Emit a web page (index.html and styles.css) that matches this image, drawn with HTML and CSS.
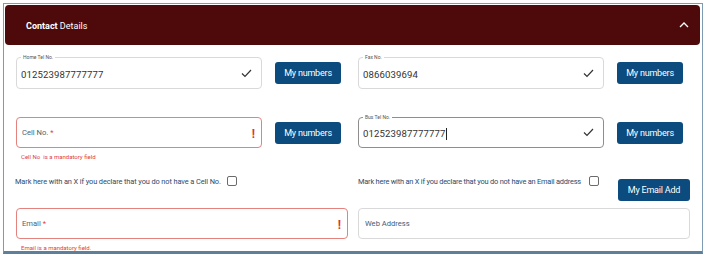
FILE: index.html
```html
<!DOCTYPE html>
<html lang="en">
<head>
    <meta charset="UTF-8">
    <meta name="viewport" content="width=device-width, initial-scale=1.0">
    <title>Contact Details</title>
    <link rel="stylesheet" href="styles.css">
</head>
<body>

<div class="panel">
    <div class="panel-head">
        <span class="panel-title"><b>Contact</b> Details</span>
        <svg class="chevron" width="10" height="7" viewBox="0 0 10 7"><polyline points="1,6 5,2 9,6" fill="none" stroke="#fff" stroke-width="1.3"/></svg>
    </div>

    <div class="panel-body">
        <!-- row 1 -->
        <div class="row row-one">
            <div class="phone">
                <div class="field">
                    <span class="notch">Home Tel No.</span>
                    <span class="value">012523987777777</span>
                    <svg class="tick" width="11" height="9" viewBox="0 0 11 9"><polyline points="1,4.5 4,7.5 10,1" fill="none" stroke="#333" stroke-width="1.2"/></svg>
                </div>
                <button class="btn">My numbers</button>
            </div>
            <div class="phone">
                <div class="field">
                    <span class="notch">Fax No.</span>
                    <span class="value">0866039694</span>
                    <svg class="tick" width="11" height="9" viewBox="0 0 11 9"><polyline points="1,4.5 4,7.5 10,1" fill="none" stroke="#333" stroke-width="1.2"/></svg>
                </div>
                <button class="btn">My numbers</button>
            </div>
        </div>

        <!-- row 2 -->
        <div class="row row-two">
            <div class="cell">
                <div class="phone">
                    <div class="field field-error">
                        <span class="placeholder">Cell No. <i>*</i></span>
                        <span class="bang">!</span>
                    </div>
                    <button class="btn">My numbers</button>
                </div>
                <p class="error-text">Cell No&nbsp; is a mandatory field</p>
            </div>
            <div class="phone">
                <div class="field field-focus">
                    <span class="notch">Bus Tel No.</span>
                    <span class="value">012523987777777<span class="caret"></span></span>
                    <svg class="tick" width="11" height="9" viewBox="0 0 11 9"><polyline points="1,4.5 4,7.5 10,1" fill="none" stroke="#333" stroke-width="1.2"/></svg>
                </div>
                <button class="btn">My numbers</button>
            </div>
        </div>

        <!-- row 3 -->
        <div class="row row-three">
            <label class="declare">
                <span>Mark here with an X if you declare that you do not have a Cell No.</span>
                <span class="box"></span>
            </label>
            <div class="declare-wrap">
                <label class="declare">
                    <span>Mark here with an X if you declare that you do not have an Email address</span>
                    <span class="box"></span>
                </label>
                <button class="btn btn-email">My Email Add</button>
            </div>
        </div>

        <!-- row 4 -->
        <div class="row row-four">
            <div class="cell">
                <div class="field field-wide field-error">
                    <span class="placeholder">Email <i>*</i></span>
                    <span class="bang">!</span>
                </div>
                <p class="error-text">Email is a mandatory field.</p>
            </div>
            <div class="cell">
                <div class="field field-wide">
                    <span class="placeholder web">Web Address</span>
                </div>
            </div>
        </div>
    </div>
</div>

</body>
</html>
```

FILE: styles.css
```css
* {
    margin: 0;
    padding: 0;
    box-sizing: border-box;
    font-family: Roboto, 'Liberation Sans', sans-serif;
}

body {
    background-color: #fff;
    width: 710px;
    height: 257px;
    overflow: hidden;
}

.panel {
    margin: 3px 0 0 3px;
    width: 700px;
    height: 251px;
    border: 1px solid #7f9bb3;
    border-bottom: 3px solid #5e7f99;
}

.panel-head {
    margin: 1px 2px 0 1px;
    height: 40px;
    background-color: #4e0a0a;
    border-radius: 4px;
    display: flex;
    align-items: center;
    justify-content: space-between;
    padding: 1px 11px 0 21px;
}

.panel-title {
    color: #fff;
    font-size: 9px;
}

.panel-title b {
    font-weight: 700;
}

.chevron {
    margin-top: -2px;
}

.panel-body {
    padding-left: 12px;
}

.row {
    display: grid;
    grid-template-columns: 332px 332px;
    column-gap: 10px;
    align-items: start;
}

.row-one {
    margin-top: 12px;
}

.row-two {
    margin-top: 28px;
}

.row-three {
    margin-top: 15px;
}

.row-four {
    margin-top: 7px;
}

.phone {
    display: flex;
    align-items: center;
    gap: 13px;
}

.field {
    position: relative;
    width: 246px;
    height: 32px;
    border: 1px solid #d9d9d9;
    border-radius: 4px;
    display: flex;
    align-items: center;
    justify-content: space-between;
    padding: 2px 9px 0 4px;
    background-color: #fff;
}

.row-two .field {
    height: 31px;
}

.field-wide {
    width: 332px;
    height: 31px;
}

.field-error {
    border-color: #e4827d;
}

.field-focus {
    border-color: #8e8e8e;
}

.notch {
    position: absolute;
    top: -4px;
    left: 4px;
    padding: 0 2px;
    background-color: #fff;
    font-size: 5px;
    line-height: 6px;
    color: #555;
}

.value {
    font-size: 9.6px;
    letter-spacing: 0.1px;
    color: #333;
    display: flex;
    align-items: center;
}

.caret {
    display: inline-block;
    width: 1px;
    height: 12px;
    margin-left: 1px;
    background-color: #222;
}

.tick {
    margin-top: -2px;
}

.placeholder {
    font-size: 7.6px;
    color: #4a5f74;
    padding-left: 1px;
    margin-top: -2px;
}

.placeholder i {
    font-style: normal;
    color: #e23b3b;
}

.placeholder.web {
    padding-left: 2px;
    color: #3f5c7a;
}

.bang {
    color: #e0332f;
    font-size: 12px;
    font-weight: 700;
    margin-right: -3px;
}

.btn {
    width: 66px;
    height: 22px;
    background-color: #0c4b7e;
    color: #fff;
    border: none;
    border-radius: 3px;
    font-size: 9px;
    letter-spacing: -0.2px;
}

.btn-email {
    width: 72px;
}

.error-text {
    margin: 5px 0 0 5px;
    font-size: 6px;
    line-height: 8px;
    color: #e23b3b;
}

.declare {
    display: flex;
    align-items: center;
    gap: 6px;
    font-size: 7.4px;
    color: #2c4b6b;
    letter-spacing: -0.1px;
    white-space: nowrap;
}

.row-three > .declare {
    margin-left: -1px;
}

.declare-wrap {
    display: flex;
    align-items: flex-start;
    justify-content: space-between;
}

.declare-wrap .declare {
    gap: 8px;
    letter-spacing: -0.2px;
}

.box {
    width: 10px;
    height: 10px;
    border: 1px solid #6b6b6b;
    border-radius: 2px;
    flex-shrink: 0;
}

.declare-wrap .btn-email {
    margin-top: 3px;
}
```
